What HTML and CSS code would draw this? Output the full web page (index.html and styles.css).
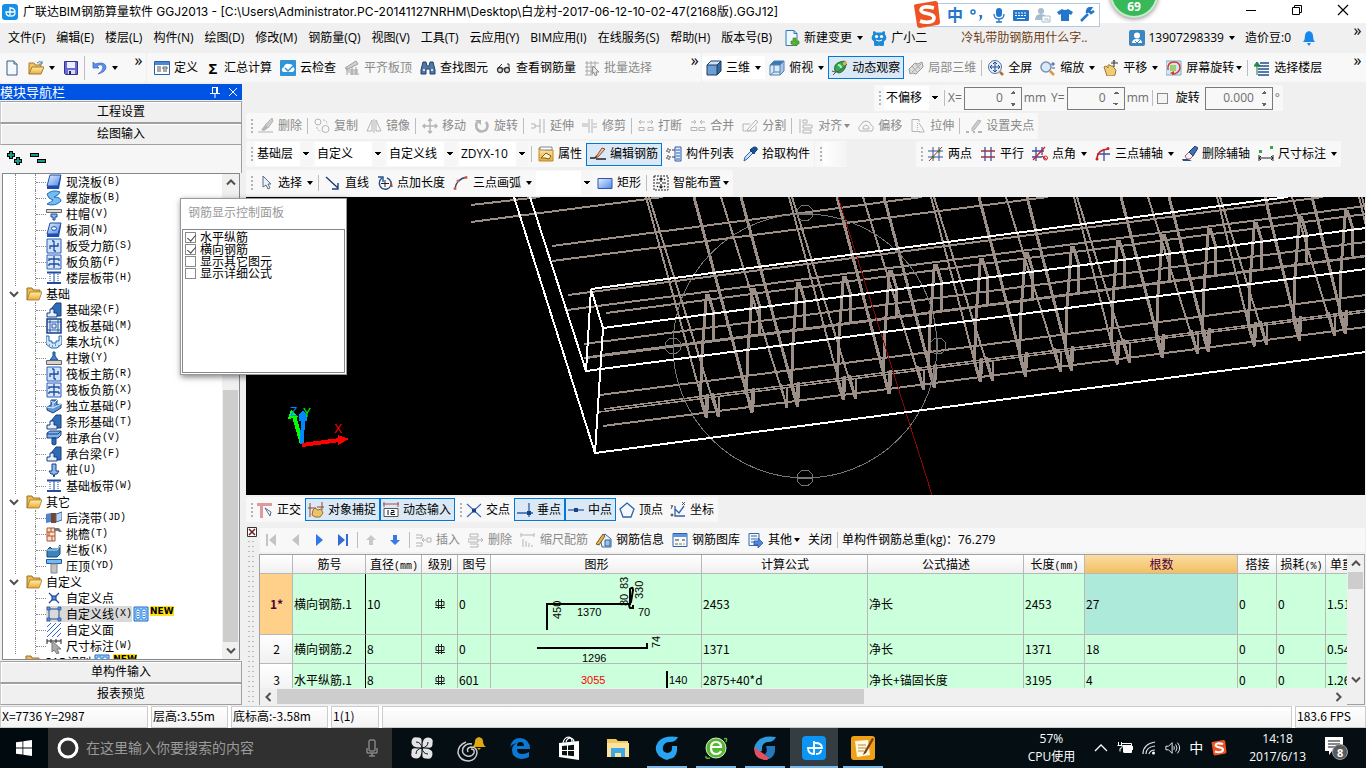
FILE: index.html
```html
<!DOCTYPE html>
<html lang="zh-CN">
<head>
<meta charset="utf-8">
<title>广联达BIM钢筋算量软件 GGJ2013</title>
<link rel="stylesheet" href="styles.css">
</head>
<body>
<svg class="sprite" aria-hidden="true">
<defs>
<linearGradient id="g-blue" x1="0" y1="0" x2="1" y2="1"><stop offset="0" stop-color="#e6f1ff"/><stop offset="1" stop-color="#4f88ea"/></linearGradient>
<linearGradient id="g-fold" x1="0" y1="0" x2="0" y2="1"><stop offset="0" stop-color="#fff0a8"/><stop offset="1" stop-color="#e9a93a"/></linearGradient>
<symbol id="app" viewBox="0 0 16 16"><rect width="16" height="16" rx="3" fill="#1590e8"/><path d="M8 3v9q-4 0-4-4h9q0-4-5-4M13 9q0 3-4 3" fill="none" stroke="#fff" stroke-width="1.300"/></symbol>
<symbol id="new" viewBox="0 0 16 16"><path d="M3 1h7l3 3v11H3z" fill="#f4f9ff" stroke="#3a5a80"/><path d="M10 1v3h3" fill="#cfe0f5" stroke="#3a5a80"/></symbol>
<symbol id="open" viewBox="0 0 16 16"><path d="M1 14V3h5l1 2h6v3" fill="#f3c65a" stroke="#a9792a"/><path d="M1 14l3-7h12l-3 7z" fill="url(#g-fold)" stroke="#a9792a"/><path d="M9 3q3-3 5 0m0-2v3h-3" fill="none" stroke="#4878a8"/></symbol>
<symbol id="save" viewBox="0 0 16 16"><path d="M1.500 1.500h13v13h-12l-1-1z" fill="#6b6bd0" stroke="#34348c"/><path d="M4 2h8v6H4z" fill="#eef0ff"/><path d="M5 10h7v4H5z" fill="#dcdcea"/><path d="M6 11h2v3H6z" fill="#22226a"/></symbol>
<symbol id="undo" viewBox="0 0 16 16"><path d="M2 2v6h6L6 6q5-3 6 1 0 4-5 7 8-2 8-7-1-6-11-3z" fill="#5b91e8" stroke="#2f62c0" stroke-width=".7"/></symbol>
<symbol id="define" viewBox="0 0 16 16"><path d="M.5 1.500h15v13H.5z" fill="#fff" stroke="#2c5fa8"/><path d="M1 2h14v3H1z" fill="#4c86d4"/><path d="M3 7h4M3 9h4M3 11h4M9 7h4v2H9zM9 11h4" stroke="#555" fill="none"/></symbol>
<symbol id="cloud" viewBox="0 0 16 16"><rect width="16" height="16" rx="1" fill="#2f95d8"/><path d="M3 12q-3-3 1-5 1-4 5-3 4 0 4 3 3 2 0 5z" fill="#fff"/><path d="M5 8l3 3 5-5" fill="none" stroke="#2f95d8" stroke-width="1.500"/></symbol>
<symbol id="level" viewBox="0 0 16 16"><path d="M1 8L12 1l2 3L4 9zM2 10h12M4 12h10M6 14h9M3 9v6M8 7v8M12 7v8" fill="#d0d0d0" stroke="#a0a0a0"/></symbol>
<symbol id="find" viewBox="0 0 16 16"><path d="M3 2h3l1 4h2l1-4h3l2 8v4h-5V9H6v5H1v-4z" fill="#5278a8" stroke="#1f3f68"/><path d="M3 10h2M11 10h2" stroke="#cfe2f7" stroke-width="2"/></symbol>
<symbol id="glass" viewBox="0 0 16 16"><circle cx="4" cy="10" r="2.500" fill="#ddd" stroke="#333" stroke-width="1.300"/><circle cx="11" cy="10" r="2.500" fill="#ddd" stroke="#333" stroke-width="1.300"/><path d="M6 9h3M2 8l4-4M13 9V4h-2" fill="none" stroke="#333"/></symbol>
<symbol id="batch" viewBox="0 0 16 16"><path d="M1 3h14M1 7h9M1 11h8M3 1v14M7 1v14M11 1v7M1 15h8" stroke="#aaa" fill="none"/><path d="M9 6l6 6h-3l1 3-2 .5-1-3-2 1z" fill="#e8e8e8" stroke="#888"/></symbol>
<symbol id="cube" viewBox="0 0 16 16"><path d="M1 5h10v10H1z" fill="#6f9fd2"/><path d="M1 5l4-4h10l-4 4z" fill="#cfe2f4"/><path d="M11 5l4-4v10l-4 4z" fill="#36699c"/><path d="M1 5h10v10H1zM1 5l4-4h10l-4 4M15 1v10l-4 4" fill="none" stroke="#1e3f66"/></symbol>
<symbol id="cube2" viewBox="0 0 16 16"><path d="M1 5h10v10H1z" fill="#dceaf8"/><path d="M1 5l4-4h10l-4 4z" fill="#3e78b4"/><path d="M11 5l4-4v10l-4 4z" fill="#a9c8e6"/><path d="M1 5h10v10H1zM1 5l4-4h10l-4 4M15 1v10l-4 4M5 5v7l-4 3M5 12h6" fill="none" stroke="#4f80b4"/></symbol>
<symbol id="orbit" viewBox="0 0 16 16"><path d="M3 11Q1 4 8 2q6-2 6 1 0 8-7 10z" fill="#35a855" stroke="#16702f"/><path d="M6 5q3 0 3 3" stroke="#b8f0b8" stroke-width="2" fill="none"/><circle cx="13" cy="3.500" r="2" fill="#e8b04a"/><path d="M0 11q6 4 15-7M1 15l3-3" fill="none" stroke="#555"/></symbol>
<symbol id="local3d" viewBox="0 0 16 16"><path d="M1 9l6-6 3 1 4-2 1 5-7 7-4-1-2 1z" fill="#ddd" stroke="#999"/><path d="M4 6l5 6M7 3l5 6M4 12l9-8" stroke="#aaa" fill="none"/></symbol>
<symbol id="full" viewBox="0 0 16 16"><circle cx="7" cy="7" r="6.500" fill="#e4eefb" stroke="#5a6f92"/><path d="M7 2v10M2 7h10M5 4l2-2 2 2M5 10l2 2 2-2M4 5L2 7l2 2M10 5l2 2-2 2" fill="none" stroke="#1c4a96"/><path d="M12 12l3 3" stroke="#b0702a" stroke-width="2.500"/></symbol>
<symbol id="zoomi" viewBox="0 0 16 16"><circle cx="6" cy="7" r="5" fill="#d8e9fb" stroke="#7b90ac" stroke-width="1.500"/><path d="M10 11l4 4" stroke="#d99a3a" stroke-width="2.500"/><path d="M11 4h4M13 2v4M12 8h3" stroke="#2f5ea8"/></symbol>
<symbol id="pan" viewBox="0 0 16 16"><path d="M1 7l2-1 2 2 0-3 2 0 1 1 2 0 1 2 2 2-1 5-2 1H4z" fill="#f0cc78" stroke="#a0772c"/><path d="M11 0v7M8 3h7M10 1.500l1-1 1 1" stroke="#333" fill="none"/></symbol>
<symbol id="rot3" viewBox="0 0 16 16"><path d="M0 1h15v14H0z" fill="#cfe8f8" stroke="#78aacc"/><path d="M4 5h6v6H4z" fill="#9ed26a"/><path d="M2 10q-1-8 6-8 6 0 6 6-1 6-8 6" fill="none" stroke="#d8382c" stroke-width="1.500"/><path d="M8 11v4l-4-2z" fill="#d8382c"/></symbol>
<symbol id="floor" viewBox="0 0 16 16"><path d="M6 3h9M4 6h11M4 9h11M4 12h11M4 15h11" stroke="#1f4f8c" stroke-width="1.500"/><path d="M3 15V4M0 6l3-4 3 4z" fill="#2aa05a" stroke="#187a40"/></symbol>
<symbol id="newch" viewBox="0 0 16 16"><path d="M2 .5h8l3 3v12H2z" fill="#eef7ff" stroke="#2f7aa8"/><path d="M10 .5v3h3" fill="none" stroke="#2f7aa8"/><path d="M9 8h3v3h3v3h-3v2H9v-2H7v-3h2z" fill="#57b52c" stroke="#2c7a10" stroke-width=".6"/></symbol>
<symbol id="mascot" viewBox="0 0 16 16"><path d="M2 1.500q2-1 3 1h6q1-2 3-1l0 3q2 2 1 5l-2 2 0 4-3 1-2-1-2 1-3-1 0-4-2-2q-1-3 1-5z" fill="#1d8bd8"/><circle cx="5.500" cy="6.500" r="1.600" fill="#fff"/><circle cx="10.500" cy="6.500" r="1.600" fill="#fff"/><path d="M5 10q3 2 6 0" stroke="#fff" fill="none"/></symbol>
<symbol id="user" viewBox="0 0 16 16"><rect width="16" height="16" rx="2" fill="#3d86c0"/><circle cx="8" cy="5.500" r="3" fill="#fff"/><path d="M3 13q0-4 5-4t5 4z" fill="#fff"/><path d="M6 11l2 2 3-3" stroke="#3d86c0" fill="none"/></symbol>
<symbol id="bell" viewBox="0 0 16 16"><path d="M2 12q2-2 2-6 0-4 4-5 4 1 4 5 0 4 2 6z" fill="#1787f0"/><path d="M6 13h4l-2 3z" fill="#1787f0"/></symbol>
<symbol id="erase" viewBox="0 0 16 16"><path d="M0 14h15" stroke="currentColor"/><path d="M3 12l4-5 3 3-4 3z" fill="currentColor"/><path d="M7 7l7-7 1 3-5 7z" fill="#ccc" stroke="currentColor"/></symbol>
<symbol id="erase2" viewBox="0 0 16 16"><path d="M0 13h6l4 2H1z" fill="#254f88"/><path d="M3 10l4-4 4 4-3 3H5z" fill="#f6eef0" stroke="#a05c70"/><path d="M7 6l6-6 3 2-5 8z" fill="#3d70b4" stroke="#1f3f70"/></symbol>
<symbol id="copy" viewBox="0 0 16 16"><circle cx="4" cy="4" r="3" fill="none" stroke="currentColor"/><circle cx="11.500" cy="11" r="3.500" fill="none" stroke="currentColor"/><path d="M9 2q4 0 4 4M3 9q0 4 4 4" fill="none" stroke="currentColor" stroke-dasharray="2 1"/></symbol>
<symbol id="mirror" viewBox="0 0 16 16"><path d="M6 2v11H1zM10 2v11h5zM8 1v14" fill="none" stroke="currentColor"/></symbol>
<symbol id="move" viewBox="0 0 16 16"><path d="M8 1v14M1 8h14M6 3l2-2 2 2M6 13l2 2 2-2M3 6L1 8l2 2M13 6l2 2-2 2" fill="none" stroke="currentColor" stroke-width="1.400"/></symbol>
<symbol id="rotate" viewBox="0 0 16 16"><path d="M3 4Q1 9 4 12t8 0q3-4 0-8" fill="none" stroke="currentColor" stroke-width="2.500"/><path d="M1 2h6v5z" fill="currentColor"/></symbol>
<symbol id="extend" viewBox="0 0 16 16"><path d="M1 6h4v4H1M5 8h5M10 1v14M14 1v14" fill="none" stroke="currentColor"/></symbol>
<symbol id="trim" viewBox="0 0 16 16"><path d="M0 8h6M7 1v14M10 1v14M11 6h4M11 9h4M0 6h6" fill="none" stroke="currentColor"/></symbol>
<symbol id="break" viewBox="0 0 16 16"><path d="M2 4h5M9 4h5M3 2L1 4l2 2M13 2l2 2-2 2M1 9.500h5v3H1zM10 9.500h5v3h-5z" fill="none" stroke="currentColor"/></symbol>
<symbol id="join" viewBox="0 0 16 16"><path d="M1 4h5M10 4h5M4 2l2 2-2 2M12 2l-2 2 2 2M1 9.500h6v3H1zM9 9.500h6v3H9z" fill="none" stroke="currentColor"/></symbol>
<symbol id="split" viewBox="0 0 16 16"><path d="M1 6h7M1 13h13V8M1 6v7M5 12l9-10 2 2-9 9z" fill="none" stroke="currentColor"/></symbol>
<symbol id="align" viewBox="0 0 16 16"><path d="M2 1v14M5 2h4v3H5zM5 7h9v3H5zM5 12h8v3H5z" fill="none" stroke="currentColor"/></symbol>
<symbol id="offset" viewBox="0 0 16 16"><path d="M2 13Q-1 9 3 7q1-4 5-4t5 4q4 2 1 6zM5 11q-1-3 3-4 4 1 3 4z" fill="none" stroke="currentColor"/></symbol>
<symbol id="stretch" viewBox="0 0 16 16"><path d="M9 4V1.500H2v12h8M9 5l5 8v1H9" fill="none" stroke="currentColor"/><path d="M7.500 5v8" stroke="currentColor" stroke-dasharray="1 1"/></symbol>
<symbol id="grip" viewBox="0 0 16 16"><path d="M0 14h3M12 14h4M7 14h2" stroke="currentColor" stroke-width="2"/><path d="M6 10l6-8 3 1-6 8-3 2z" fill="#ccc" stroke="currentColor"/></symbol>
<symbol id="prop" viewBox="0 0 16 16"><path d="M1 2h5l1 2h8v11H1z" fill="url(#g-fold)" stroke="#c08828"/><path d="M2 1h12v3H2z" fill="#fff" stroke="#888"/><path d="M3 12l5-5 5 3-2 3-4-1z" fill="#fff3d0" stroke="#7a5a20"/></symbol>
<symbol id="editb" viewBox="0 0 16 16"><path d="M0 12h5l3-3M6 13h10" fill="none" stroke="#222" stroke-width="1.500"/><path d="M6 11l6-9 3 1-7 8z" fill="#f2c79a" stroke="#8c4a2c"/></symbol>
<symbol id="list" viewBox="0 0 16 16"><path d="M1 3h3v3H1zM1 10h3v3H1z" fill="none" stroke="#333" stroke-dasharray="2 1"/><path d="M6 4h3M6 11h3" stroke="#333"/><path d="M9 1h6v14H9z" fill="#e3eefc" stroke="#2b5da8"/><path d="M10 4h4M10 7h4M10 10h4M10 13h4" stroke="#2b5da8"/></symbol>
<symbol id="pick" viewBox="0 0 16 16"><path d="M2 15l1-4 6-6 2 2-6 6z" fill="#cfe6fa" stroke="#2a63a8"/><path d="M8 4l4 4 1-2 2-2q1-3-3-3L9 3z" fill="#1d5298" stroke="#123a70"/></symbol>
<symbol id="ax1" viewBox="0 0 16 16"><path d="M0 5h15M0 11h15M5 1v14M11 1v14" stroke="#3c4fa0"/><path d="M1 15L14 1" stroke="#c02828"/><circle cx="5" cy="11" r="1.500" fill="#2c8a2c"/><circle cx="11" cy="5" r="1.500" fill="#2c8a2c"/></symbol>
<symbol id="ax2" viewBox="0 0 16 16"><path d="M5 1v14M11 1v14" stroke="#3c4fa0" stroke-width="1.300"/><path d="M1 5h14M1 11h14" stroke="#a03048" stroke-width="1.300"/></symbol>
<symbol id="ax3" viewBox="0 0 16 16"><path d="M0 5h12M0 11h10M4 1v14M10 1v8" stroke="#3c4fa0" stroke-width="1.300"/><path d="M1 14L13 1M10 10l4 3" stroke="#d02020" stroke-width="1.300"/><circle cx="13.500" cy="12" r="2" fill="none" stroke="#d02020"/></symbol>
<symbol id="ax4" viewBox="0 0 16 16"><path d="M2 8h13M9 3v12" stroke="#3c4fa0" stroke-width="1.300"/><path d="M2 13Q2 4 13 3" fill="none" stroke="#d02020" stroke-width="1.500"/><circle cx="2" cy="13" r="1.500" fill="#d02020"/><circle cx="13" cy="2.500" r="1.500" fill="#d02020"/></symbol>
<symbol id="dim" viewBox="0 0 16 16"><path d="M1 9v6M15 9v6M1 12h14M3 10l-2 2 2 2M13 10l2 2-2 2" fill="none" stroke="#222"/><path d="M1 4h3v3H1zM12 0h3v3h-3z" fill="#2fa84a"/></symbol>
<symbol id="arrow" viewBox="0 0 16 16"><path d="M5 1v11l3-2 2 4 2-1-2-4h3z" fill="#e9f0fa" stroke="#5a6c88"/></symbol>
<symbol id="line" viewBox="0 0 16 16"><path d="M1 2l12 11M13 8v6H7" fill="none" stroke="#1c3f78" stroke-width="1.400"/></symbol>
<symbol id="ptlen" viewBox="0 0 16 16"><path d="M5 3Q1 6 3 11q2 4 7 3 5-2 4-7-1-3-4-4" fill="none" stroke="#24508c" stroke-width="1.400"/><path d="M8 5v7M4 8.500h8" stroke="#222"/><path d="M1 2h5v5" fill="none" stroke="#24508c" stroke-width="1.400"/><path d="M14 7l1 5" stroke="#c04030" stroke-width="1.500"/></symbol>
<symbol id="arc" viewBox="0 0 16 16"><path d="M2 14Q3 4 14 2" fill="none" stroke="#28406c" stroke-width="1.400"/><circle cx="2" cy="13.500" r="1.500" fill="#d8604a"/><circle cx="5" cy="6" r="1.500" fill="#d8604a"/><circle cx="13" cy="2.500" r="1.500" fill="#d8604a"/></symbol>
<symbol id="rect" viewBox="0 0 16 16"><path d="M1 3.500h14v10H1z" fill="url(#g-blue)" stroke="#2a56b0"/></symbol>
<symbol id="smart" viewBox="0 0 16 16"><path d="M1 1h14v14H1z" fill="none" stroke="#222" stroke-dasharray="2 1"/><path d="M8 3v4M8 9v4M3 8h4M9 8h4M6.500 4.500L8 3l1.500 1.500M6.500 11.500L8 13l1.500-1.500M4 4l1 1M12 4l-1 1M4 12l1-1M12 12l-1-1" fill="none" stroke="#222" stroke-width="1.200"/></symbol>
<symbol id="ortho" viewBox="0 0 16 16"><path d="M0 1h15v3H6v12H3V4H0z" fill="#dc9c9c"/><path d="M8 6l5 8 1-4z" fill="#fff" stroke="#56688a"/></symbol>
<symbol id="snap" viewBox="0 0 16 16"><path d="M2 1v14M0 6h8M14 0v8M9 5h7" stroke="#96403c"/><path d="M5 8l2-2 3 2 3-1 2 4-3 4H7l-3-2z" fill="#ecc468" stroke="#98702c"/></symbol>
<symbol id="dyn" viewBox="0 0 16 16"><path d="M0 2h16M1 0v5M15 0v5" stroke="#a45050"/><path d="M1 6.500h14v8H1z" fill="#fff" stroke="#555"/><path d="M5 8v5M8 8.500h3v2H8v2h4" fill="none" stroke="#111"/></symbol>
<symbol id="cross" viewBox="0 0 16 16"><path d="M1 2l14 13M15 2L1 15" stroke="#3c6cb4" stroke-width="1.200"/><rect x="6" y="6.500" width="4" height="4" fill="#1c4484"/></symbol>
<symbol id="perp" viewBox="0 0 16 16"><path d="M0 11h16M12 1v14" stroke="#2c5ca8" stroke-width="1.300"/><rect x="10" y="9" width="4" height="4" fill="#1c4484"/></symbol>
<symbol id="mid" viewBox="0 0 16 16"><path d="M0 8h16" stroke="#2c5ca8" stroke-width="1.300"/><rect x="6" y="6" width="4" height="4" fill="#1c4484"/></symbol>
<symbol id="penta" viewBox="0 0 16 16"><path d="M8 1l7 6-3 8H4L1 7z" fill="#f4f9ff" stroke="#2c62ac" stroke-width="1.300"/></symbol>
<symbol id="coord" viewBox="0 0 16 16"><path d="M5 4v10h10M5 14V7l4 4 5-7" fill="none" stroke="#2c62ac" stroke-width="1.300"/><path d="M1 3l1 2M3 3l-2 4M12 0l3 3M15 0l-3 3" stroke="#333" stroke-width=".8"/><circle cx="2" cy="13" r="1" fill="none" stroke="#333"/></symbol>
<symbol id="ins" viewBox="0 0 16 16"><path d="M0 3h6v3H0M0 14h6v-3H0M6 8h4M8 6L6 8l2 2M11 6h4v4h-4z" fill="none" stroke="currentColor"/></symbol>
<symbol id="del" viewBox="0 0 16 16"><path d="M2 2h8v3H2zM0 7h10v3H0zM2 12h8v3H2M10 8h5M13 6l2 2-2 2" fill="none" stroke="currentColor"/></symbol>
<symbol id="scale" viewBox="0 0 16 16"><path d="M1 3h13M1 1v4M14 1v4M3 7v8M6 9v6M9 11v4M12 13v2" fill="none" stroke="currentColor"/></symbol>
<symbol id="info" viewBox="0 0 16 16"><path d="M4 6l5-4 6 5v8H6z" fill="#e8f1fc" stroke="#35659c"/><path d="M0 12l7-10 2 2-6 9z" fill="#e6b450" stroke="#7c5820"/><path d="M9 8h5v6H9z" fill="#9cc0e8" stroke="#35659c"/></symbol>
<symbol id="lib" viewBox="0 0 16 16"><path d="M1 1.500h14v13H1z" fill="#f6faff" stroke="#2c62ac"/><path d="M1 2h14v3H1z" fill="#5d94dc"/><path d="M3 8h4M10 8h3" stroke="#333"/><path d="M3 12h3" stroke="#d04040"/><path d="M7 12h3" stroke="#3aa03a"/><path d="M11 12h2" stroke="#e0a020"/></symbol>
<symbol id="other" viewBox="0 0 16 16"><path d="M1 1.500h10v12H1z" fill="#f0f6ff" stroke="#3868a8"/><path d="M3 4h6M3 7h6M3 10h3" stroke="#3868a8"/><path d="M6 9h4V6l5 5-5 5v-3H6z" fill="#4f86dc" stroke="#1f4c98" stroke-width=".7"/></symbol>
<symbol id="first" viewBox="0 0 16 16"><path d="M2 2h2v12H2zM12 2v12L5 8z" fill="#c4c4c4"/></symbol>
<symbol id="prev" viewBox="0 0 16 16"><path d="M11 2v12L4 8z" fill="#c4c4c4"/></symbol>
<symbol id="next" viewBox="0 0 16 16"><path d="M4 2v12l7-6z" fill="#2f78e8"/></symbol>
<symbol id="last" viewBox="0 0 16 16"><path d="M2 2v12l7-6zM10 2h2v12h-2z" fill="#2f6cd8"/></symbol>
<symbol id="up" viewBox="0 0 16 16"><path d="M7 3l5 5H9v5H5V8H2z" fill="#c8c8c8"/></symbol>
<symbol id="down" viewBox="0 0 16 16"><path d="M7 13L2 8h3V3h4v5h3z" fill="#3c78e4"/></symbol>
<symbol id="folder" viewBox="0 0 16 16"><path d="M1 14V2h5l1 2h7v3" fill="#f0b850" stroke="#9c7020"/><path d="M1 14l3-8h12l-3 8z" fill="url(#g-fold)" stroke="#a07828" stroke-width=".8"/></symbol>
<symbol id="slab" viewBox="0 0 16 16"><path d="M4 1h11l-3 11H1z" fill="url(#g-blue)" stroke="#1b4fa0"/><path d="M1 12h11l3-11v3l-2 11H1z" fill="#1f4fae"/></symbol>
<symbol id="spiral" viewBox="0 0 16 16"><path d="M1 4q6-5 13-2-1 3-6 5 7 0 7 4-6 6-14 3 4-2 6-4-5-1-6-6z" fill="#74bcf0" stroke="#1d6cc0"/></symbol>
<symbol id="cap" viewBox="0 0 16 16"><path d="M.5 3.500h15v3H.5z" fill="#ddd" stroke="#666"/><path d="M5 8h6v3H9v3H7v-3H5z" fill="#8ab8ee" stroke="#1d4c98"/></symbol>
<symbol id="hole" viewBox="0 0 16 16"><path d="M4 1h11l-3 11H1z" fill="url(#g-blue)" stroke="#1b4fa0"/><path d="M1 12h11l3-11v3l-2 11H1z" fill="#1f4fae"/><ellipse cx="8" cy="6.500" rx="2.500" ry="1.800" fill="#fff" stroke="#1b4fa0"/></symbol>
<symbol id="force" viewBox="0 0 16 16"><path d="M1 1h14v14H1z" fill="#cfe2fb" stroke="#2c5cb4"/><path d="M8 3v10M12 5v3H4v3M6 3h2M8 13h2" fill="none" stroke="#1f4ca0" stroke-width="1.300"/></symbol>
<symbol id="neg" viewBox="0 0 16 16"><path d="M1 1h14v14H1z" fill="#d8e8fc" stroke="#2c5cb4"/><path d="M8 2v12M3 7V5h10v2M3 10h10M3 10v2M13 10v2" fill="none" stroke="#1f4ca0" stroke-width="1.300"/></symbol>
<symbol id="strip" viewBox="0 0 16 16"><path d="M1 2.500h14M1 13h14" stroke="#1f4ca0" stroke-width="2"/><path d="M8 3v10" stroke="#1f4ca0"/><path d="M4 4v8M12 4v8" stroke="#1f4ca0" stroke-dasharray="1 1"/></symbol>
<symbol id="fbeam" viewBox="0 0 16 16"><path d="M5 7l5-6h5v13h-4z" fill="#2f6cb8" stroke="#173f80"/><path d="M1 15v-4h3V7h4v4h3v4z" fill="#e4eefc" stroke="#173f80"/></symbol>
<symbol id="raft" viewBox="0 0 16 16"><path d="M1 1h14v14H1z" fill="#dfeafa" stroke="#173f80" stroke-width="1.500"/><path d="M4 1v14M12 1v14M1 4h14M1 12h14M6 6h4v4H6z" fill="none" stroke="#2d5da8"/></symbol>
<symbol id="pit" viewBox="0 0 16 16"><path d="M0 2h3v5h3v2h4V7h3V2h3v8l-5 4H5l-5-4z" fill="#cfe6fa" stroke="#1f66b0"/><path d="M3 11h1M6 12h1M9 11h1M12 12h1" stroke="#1c4c90"/></symbol>
<symbol id="pier" viewBox="0 0 16 16"><path d="M7 2h2v4l3 4H4l3-4z" fill="#4684cc" stroke="#1d4c98"/><path d="M.5 10.500h15v4H.5z" fill="#d4d4d4" stroke="#666"/></symbol>
<symbol id="indep" viewBox="0 0 16 16"><path d="M1 9l4-2V2h6v5l4-1v4l-8 5-6-3z" fill="#5c96d8" stroke="#173f80"/><path d="M5 3l3 2 3-3M7 5v5l-6-1M7 10l8-4" fill="none" stroke="#e4f0ff"/></symbol>
<symbol id="pcap" viewBox="0 0 16 16"><path d="M1 3l3-2h11v4l-3 3H1z" fill="#7db4ea" stroke="#173f80"/><path d="M1 4h11l3-3" fill="none" stroke="#173f80"/><path d="M6 8h4v6l-2 1-2-1z" fill="#2f6cb8" stroke="#173f80"/></symbol>
<symbol id="pile" viewBox="0 0 16 16"><path d="M6 2h4v7h3l-2 3H9l-1 3-1-3H5L3 9h3z" fill="#8ab8ee" stroke="#173f80"/></symbol>
<symbol id="post" viewBox="0 0 16 16"><path d="M0 4l5-1v9l-5 1z" fill="#4c86d0"/><path d="M5 3h5v10H5z" fill="#7c4428"/><path d="M10 4l6-2v8l-6 2z" fill="#bcd4f0" stroke="#456c9c"/></symbol>
<symbol id="eave" viewBox="0 0 16 16"><path d="M1 2h8v13H1z" fill="#fbe0cc" stroke="#b0502c"/><path d="M1 6h8M1 10h8M5 2v4M3 6v4M6 10v5" stroke="#b0502c"/><path d="M8 2h5l3 4h-3l-1-1H8z" fill="#777"/></symbol>
<symbol id="rail" viewBox="0 0 16 16"><path d="M1 8l3-3 2 2h6l2-4v9l-3 3H1z" fill="#3c84bc" stroke="#164874"/><path d="M1 8h10l3-4" fill="none" stroke="#c4e4fc"/></symbol>
<symbol id="coping" viewBox="0 0 16 16"><path d="M.5 1.500h15v4H.5z" fill="#74b8f4" stroke="#1d5ca8"/><path d="M5 6h6v9H5z" fill="#c4c4c4" stroke="#888"/></symbol>
<symbol id="cpoint" viewBox="0 0 16 16"><path d="M3 3l10 10M13 3L3 13" stroke="#1f4f9c" stroke-width="1.300"/><rect x="6" y="6" width="4" height="4" fill="#4f8cdc" stroke="#173f80"/></symbol>
<symbol id="cline" viewBox="0 0 16 16"><path d="M3 3h10v10H3z" fill="none" stroke="#1f4f9c"/><path d="M1 1h3v3H1zM12 1h3v3h-3zM1 12h3v3H1zM12 12h3v3h-3z" fill="#5c94e0" stroke="#1f4f9c" stroke-width=".7"/></symbol>
<symbol id="cface" viewBox="0 0 16 16"><path d="M1 5l4-4M1 10l9-9M1 15L15 1M6 15l9-9M11 15l4-4" stroke="#2f68c8"/></symbol>
<symbol id="cdim" viewBox="0 0 16 16"><path d="M1 1v5M15 1v5M1 3h14M5 1v4M10 1v4" stroke="#222"/><path d="M6 3v11l2-2 3 4 2-1-2-4h4z" fill="#aaa" stroke="#777"/></symbol>
<symbol id="book" viewBox="0 0 16 16"><path d="M1 1h14v14H1z" fill="#a8d4ff" stroke="#1f6ac0"/><path d="M3 3h4v10H3zM9 3h4v10H9z" fill="#fff" stroke="#2680dc"/><path d="M4 5.500h2M4 8h2M4 10.500h2M10 5.500h2M10 8h2M10 10.500h2" stroke="#2680dc"/></symbol>
<symbol id="phi" viewBox="0 0 10 10"><path d="M3.500 0v10M6.500 0v10M0 8.500h10M1 2.500h8v4H1z" fill="none" stroke="#222"/></symbol>
<symbol id="up-ch" viewBox="0 0 10 10"><path d="M1 7l4-4 4 4" fill="none" stroke="#505050" stroke-width="2"/></symbol>
<symbol id="dn-ch" viewBox="0 0 10 10"><path d="M1 3l4 4 4-4" fill="none" stroke="#505050" stroke-width="2"/></symbol>
<symbol id="lf-ch" viewBox="0 0 10 10"><path d="M7 1L3 5l4 4" fill="none" stroke="#505050" stroke-width="2"/></symbol>
<symbol id="rt-ch" viewBox="0 0 10 10"><path d="M3 1l4 4-4 4" fill="none" stroke="#505050" stroke-width="2"/></symbol>
<symbol id="sogou" viewBox="0 0 28 28"><path d="M1 5Q1 3 4 3L22 0q3 0 3 3l2 18q0 3-3 3L7 27q-3 0-3-3z" fill="#ee5324"/><path d="M21 7Q9 4 8 9c0 5 13 2 13 8 0 5-9 5-14 3" fill="none" stroke="#fff" stroke-width="3.600"/></symbol>
</defs>
</svg>

<header class="titlebar">
  <svg class="ic"><use href="#app"/></svg>
  <h1 class="title">广联达BIM钢筋算量软件 GGJ2013 - [C:\Users\Administrator.PC-20141127NRHM\Desktop\白龙村-2017-06-12-10-02-47(2168版).GGJ12]</h1>
  <div class="winbtns">
    <button aria-label="最小化"><svg viewBox="0 0 12 12"><path d="M1 6.500h10" stroke="#000"/></svg></button>
    <button aria-label="还原"><svg viewBox="0 0 12 12"><path d="M1.500 3.500h7v7h-7zM3.500 3.500v-2h7v7h-2" fill="none" stroke="#000"/></svg></button>
    <button aria-label="关闭"><svg viewBox="0 0 12 12"><path d="M1 1l10 10M11 1L1 11" stroke="#000" stroke-width="1.200"/></svg></button>
  </div>
</header>

<div class="ime">
  <svg class="ime-logo"><use href="#sogou"/></svg>
  <span class="ime-zh">中</span>
  <svg viewBox="0 0 16 16"><circle cx="4" cy="5" r="2" fill="none" stroke="#2277cc" stroke-width="1.500"/><path d="M10 8h3q1 4-3 6 2-3 0-6z" fill="#2277cc"/></svg>
  <svg viewBox="0 0 16 16"><rect x="5" y="1" width="6" height="9" rx="3" fill="#2277cc"/><path d="M3 7q0 5 5 5t5-5M8 12v3M5 15h6" fill="none" stroke="#2277cc" stroke-width="1.300"/></svg>
  <svg viewBox="0 0 16 16"><rect y="3" width="16" height="11" rx="1" fill="#2277cc"/><path d="M2 6h12M2 8.500h12" stroke="#fff" stroke-dasharray="2 1"/><path d="M4 11.500h8" stroke="#fff"/></svg>
  <svg viewBox="0 0 16 16"><circle cx="6" cy="4" r="3" fill="#a8bccf"/><path d="M0 13q0-6 6-6t6 6z" fill="#a8bccf"/><path d="M7 9h8v6H7z" fill="#fff" stroke="#a8bccf"/><path d="M10 11v3M12 11v2h2" fill="none" stroke="#a8bccf"/></svg>
  <svg viewBox="0 0 16 16"><path d="M5 2q3 2 6 0l5 3-2 3-2-1v7H4V7L2 8 0 5z" fill="#2277cc"/></svg>
  <svg viewBox="0 0 16 16"><path d="M2 14l7-7M15 4l-3 2-2-2 2-3q-4 0-4 5" fill="none" stroke="#2277cc" stroke-width="2.600"/></svg>
</div>
<div class="speedball">69</div>

<nav class="menubar">
  <div class="menus">
    <button>文件(F)</button><button>编辑(E)</button><button>楼层(L)</button><button>构件(N)</button><button>绘图(D)</button><button>修改(M)</button><button>钢筋量(Q)</button><button>视图(V)</button><button>工具(T)</button><button>云应用(Y)</button><button>BIM应用(I)</button><button>在线服务(S)</button><button>帮助(H)</button><button>版本号(B)</button>
  </div>
  <div class="menu-extra">
    <button class="tb"><svg class="ic"><use href="#newch"/></svg>新建变更<i class="caret"></i></button>
    <button class="tb"><svg class="ic"><use href="#mascot"/></svg>广小二</button>
  </div>
  <a class="tip" href="#">冷轧带肋钢筋用什么字..</a>
  <div class="account">
    <button class="tb"><svg class="ic"><use href="#user"/></svg>13907298339<i class="caret"></i></button>
    <button class="tb">造价豆:0</button>
    <button class="tb" aria-label="通知"><svg class="ic"><use href="#bell"/></svg></button>
  </div>
  <button class="more">»</button>
</nav>

<div class="toolrow">
  <div class="group g-file">
    <button class="tb" aria-label="新建"><svg class="ic"><use href="#new"/></svg></button>
    <button class="tb" aria-label="打开"><svg class="ic"><use href="#open"/></svg><i class="caret"></i></button>
    <button class="tb" aria-label="保存"><svg class="ic"><use href="#save"/></svg></button>
    <i class="sep tall"></i>
    <button class="tb" aria-label="撤销"><svg class="ic"><use href="#undo"/></svg><i class="caret"></i></button>
    <button class="more">»</button>
  </div>
  <div class="group g-calc">
    <button class="tb"><svg class="ic"><use href="#define"/></svg>定义</button>
    <button class="tb"><b class="sigma">Σ</b>汇总计算</button>
    <button class="tb"><svg class="ic"><use href="#cloud"/></svg>云检查</button>
    <button class="tb" disabled><svg class="ic"><use href="#level"/></svg>平齐板顶</button>
    <button class="tb"><svg class="ic"><use href="#find"/></svg>查找图元</button>
    <button class="tb"><svg class="ic"><use href="#glass"/></svg>查看钢筋量</button>
    <button class="tb" disabled><svg class="ic"><use href="#batch"/></svg>批量选择</button>
    <button class="more">»</button>
  </div>
  <div class="group g-view">
    <button class="tb combo"><svg class="ic"><use href="#cube"/></svg>三维<i class="caret"></i></button>
    <button class="tb"><svg class="ic"><use href="#cube2"/></svg>俯视<i class="caret"></i></button>
    <button class="tb on"><svg class="ic"><use href="#orbit"/></svg>动态观察</button>
    <button class="tb" disabled><svg class="ic"><use href="#local3d"/></svg>局部三维</button>
    <i class="sep"></i>
    <button class="tb"><svg class="ic"><use href="#full"/></svg>全屏</button>
    <button class="tb"><svg class="ic"><use href="#zoomi"/></svg>缩放<i class="caret"></i></button>
    <button class="tb"><svg class="ic"><use href="#pan"/></svg>平移<i class="caret"></i></button>
    <button class="tb"><svg class="ic"><use href="#rot3"/></svg>屏幕旋转<i class="caret near"></i></button>
    <i class="sep"></i>
    <button class="tb"><svg class="ic"><use href="#floor"/></svg>选择楼层</button>
    <button class="more">»</button>
  </div>
</div>

<main class="work">
  <aside class="nav">
    <div class="nav-head"><h2>模块导航栏</h2>
      <svg viewBox="0 0 12 12"><path d="M3.500 1v6M8 1v6M3 1.500h6M1 7.500h10M6 8v4" stroke="#fff" fill="none"/><path d="M7 1h2v6H7z" fill="#fff"/></svg>
      <svg viewBox="0 0 12 12"><path d="M2 2l8 8M10 2l-8 8" stroke="#fff"/></svg>
    </div>
    <button class="nav-btn">工程设置</button>
    <button class="nav-btn">绘图输入</button>
    <div class="nav-tools">
      <button aria-label="展开"><svg viewBox="0 0 18 16"><path d="M5 1v8M1 5h8M12 7v8M8 11h8" stroke="#000" stroke-width="4"/><path d="M5 2v6M2 5h6M12 8v6M9 11h6" stroke="#199a8a" stroke-width="2"/></svg></button>
      <button aria-label="折叠"><svg viewBox="0 0 18 16"><path d="M1 5h9M8 11h9" stroke="#000" stroke-width="4"/><path d="M2 5h7M9 11h7" stroke="#199a8a" stroke-width="2"/></svg></button>
    </div>
    <div class="tree-box">
      <ul class="tree">
        <li><ul>
          <li><svg class="ic"><use href="#slab"/></svg>现浇板<kbd>(B)</kbd></li>
          <li><svg class="ic"><use href="#spiral"/></svg>螺旋板<kbd>(B)</kbd></li>
          <li><svg class="ic"><use href="#cap"/></svg>柱帽<kbd>(V)</kbd></li>
          <li><svg class="ic"><use href="#hole"/></svg>板洞<kbd>(N)</kbd></li>
          <li><svg class="ic"><use href="#force"/></svg>板受力筋<kbd>(S)</kbd></li>
          <li><svg class="ic"><use href="#neg"/></svg>板负筋<kbd>(F)</kbd></li>
          <li><svg class="ic"><use href="#strip"/></svg>楼层板带<kbd>(H)</kbd></li>
        </ul></li>
        <li><div class="branch"><svg class="tw"><use href="#dn-ch"/></svg><svg class="ic"><use href="#folder"/></svg>基础</div><ul>
          <li><svg class="ic"><use href="#fbeam"/></svg>基础梁<kbd>(F)</kbd></li>
          <li><svg class="ic"><use href="#raft"/></svg>筏板基础<kbd>(M)</kbd></li>
          <li><svg class="ic"><use href="#pit"/></svg>集水坑<kbd>(K)</kbd></li>
          <li><svg class="ic"><use href="#pier"/></svg>柱墩<kbd>(Y)</kbd></li>
          <li><svg class="ic"><use href="#force"/></svg>筏板主筋<kbd>(R)</kbd></li>
          <li><svg class="ic"><use href="#neg"/></svg>筏板负筋<kbd>(X)</kbd></li>
          <li><svg class="ic"><use href="#indep"/></svg>独立基础<kbd>(P)</kbd></li>
          <li><svg class="ic"><use href="#fbeam"/></svg>条形基础<kbd>(T)</kbd></li>
          <li><svg class="ic"><use href="#pcap"/></svg>桩承台<kbd>(V)</kbd></li>
          <li><svg class="ic"><use href="#fbeam"/></svg>承台梁<kbd>(F)</kbd></li>
          <li><svg class="ic"><use href="#pile"/></svg>桩<kbd>(U)</kbd></li>
          <li><svg class="ic"><use href="#strip"/></svg>基础板带<kbd>(W)</kbd></li>
        </ul></li>
        <li><div class="branch"><svg class="tw"><use href="#dn-ch"/></svg><svg class="ic"><use href="#folder"/></svg>其它</div><ul>
          <li><svg class="ic"><use href="#post"/></svg>后浇带<kbd>(JD)</kbd></li>
          <li><svg class="ic"><use href="#eave"/></svg>挑檐<kbd>(T)</kbd></li>
          <li><svg class="ic"><use href="#rail"/></svg>栏板<kbd>(K)</kbd></li>
          <li><svg class="ic"><use href="#coping"/></svg>压顶<kbd>(YD)</kbd></li>
        </ul></li>
        <li><div class="branch"><svg class="tw"><use href="#dn-ch"/></svg><svg class="ic"><use href="#folder"/></svg>自定义</div><ul>
          <li><svg class="ic"><use href="#cpoint"/></svg>自定义点</li>
          <li class="sel"><span class="hl"><svg class="ic"><use href="#cline"/></svg>自定义线<kbd>(X)</kbd></span><svg class="ic"><use href="#book"/></svg><em class="newtag">NEW</em></li>
          <li><svg class="ic"><use href="#cface"/></svg>自定义面</li>
          <li><svg class="ic"><use href="#cdim"/></svg>尺寸标注<kbd>(W)</kbd></li>
        </ul></li>
        <li><div class="branch last"><svg class="tw"></svg><svg class="ic"><use href="#folder"/></svg><span>CAD识别</span><svg class="ic"><use href="#book"/></svg><em class="newtag">NEW</em></div></li>
      </ul>
      <div class="vscroll"><svg><use href="#up-ch"/></svg><i class="thumb"></i><svg><use href="#dn-ch"/></svg></div>
    </div>
    <button class="nav-btn">单构件输入</button>
    <button class="nav-btn">报表预览</button>
  </aside>

  <section class="stage">
    <div class="row row-right">
      <form class="bar offsetbar">
        <i class="grip"></i>
        <select aria-label="偏移方式" class="sel-s"><option>不偏移</option></select>
        <i class="sep"></i>
        <label for="ox">X=</label><span class="spin"><input id="ox" value="0" disabled><i></i></span><span>mm</span>
        <label for="oy" class="yl">Y=</label><span class="spin"><input id="oy" value="0" disabled><i></i></span><span>mm</span>
        <i class="sep"></i>
        <input type="checkbox" id="rt"><label for="rt" class="dark">旋转</label>
        <span class="spin wide"><input aria-label="旋转角度" value="0.000" disabled><i></i></span><span>°</span>
      </form>
    </div>
    <div class="row">
      <div class="bar">
        <i class="grip"></i>
        <button class="tb" disabled><svg class="ic"><use href="#erase"/></svg>删除</button>
        <i class="sep"></i>
        <button class="tb" disabled><svg class="ic"><use href="#copy"/></svg>复制</button>
        <button class="tb" disabled><svg class="ic"><use href="#mirror"/></svg>镜像</button>
        <i class="sep"></i>
        <button class="tb" disabled><svg class="ic"><use href="#move"/></svg>移动</button>
        <button class="tb" disabled><svg class="ic"><use href="#rotate"/></svg>旋转</button>
        <i class="sep"></i>
        <button class="tb" disabled><svg class="ic"><use href="#extend"/></svg>延伸</button>
        <button class="tb" disabled><svg class="ic"><use href="#trim"/></svg>修剪</button>
        <i class="sep"></i>
        <button class="tb" disabled><svg class="ic"><use href="#break"/></svg>打断</button>
        <button class="tb" disabled><svg class="ic"><use href="#join"/></svg>合并</button>
        <button class="tb" disabled><svg class="ic"><use href="#split"/></svg>分割</button>
        <i class="sep"></i>
        <button class="tb" disabled><svg class="ic"><use href="#align"/></svg>对齐<i class="caret near"></i></button>
        <button class="tb" disabled><svg class="ic"><use href="#offset"/></svg>偏移</button>
        <button class="tb" disabled><svg class="ic"><use href="#stretch"/></svg>拉伸</button>
        <i class="sep"></i>
        <button class="tb" disabled><svg class="ic"><use href="#grip"/></svg>设置夹点</button>
      </div>
    </div>
    <div class="row">
      <div class="bar">
        <i class="grip"></i>
        <div class="selects">
          <select aria-label="楼层" class="sel-s"><option>基础层</option></select>
          <select aria-label="类别" class="sel-m"><option>自定义</option></select>
          <select aria-label="构件类型" class="sel-m"><option>自定义线</option></select>
          <select aria-label="构件" class="sel-m"><option>ZDYX-10</option></select>
        </div>
        <i class="sep"></i>
        <button class="tb"><svg class="ic"><use href="#prop"/></svg>属性</button>
        <button class="tb on"><svg class="ic"><use href="#editb"/></svg>编辑钢筋</button>
        <button class="tb"><svg class="ic"><use href="#list"/></svg>构件列表</button>
        <button class="tb"><svg class="ic"><use href="#pick"/></svg>拾取构件</button>
      </div>
      <div class="bar stub"><i class="grip"></i><i class="blank"></i></div>
      <div class="bar axisbar">
        <i class="grip"></i>
        <button class="tb"><svg class="ic"><use href="#ax1"/></svg>两点</button>
        <button class="tb"><svg class="ic"><use href="#ax2"/></svg>平行</button>
        <button class="tb"><svg class="ic"><use href="#ax3"/></svg>点角<i class="caret"></i></button>
        <button class="tb"><svg class="ic"><use href="#ax4"/></svg>三点辅轴<i class="caret"></i></button>
        <button class="tb"><svg class="ic"><use href="#erase2"/></svg>删除辅轴</button>
        <button class="tb"><svg class="ic"><use href="#dim"/></svg>尺寸标注<i class="caret"></i></button>
      </div>
    </div>
    <div class="row drawrow">
      <div class="bar">
        <i class="grip"></i>
        <button class="tb"><svg class="ic"><use href="#arrow"/></svg>选择<i class="caret"></i></button>
        <i class="sep"></i>
        <button class="tb"><svg class="ic"><use href="#line"/></svg>直线</button>
        <button class="tb"><svg class="ic"><use href="#ptlen"/></svg>点加长度</button>
        <button class="tb"><svg class="ic"><use href="#arc"/></svg>三点画弧<i class="caret"></i></button>
        <select aria-label="画弧方式" class="sel-s"><option></option></select>
        <button class="tb"><svg class="ic"><use href="#rect"/></svg>矩形</button>
        <i class="sep"></i>
        <button class="tb"><svg class="ic"><use href="#smart"/></svg>智能布置<i class="caret near"></i></button>
      </div>
    </div>

    <div class="canvas">
      <svg class="model" viewBox="246 197 1120 298" preserveAspectRatio="xMinYMin slice" role="img" aria-label="钢筋三维视图">
        <defs>
          <path id="stirrup" d="M707 294l-1 6-4 54-1.500 44 6 20 1.500-24M708 294l5 16v30M706 396l.7 22" fill="none" stroke-width="3"/>
          <path id="hook" d="M713 393l5.500 24 1-20" fill="none" stroke-width="2"/>
        </defs>
        <g class="rebar">
          <path d="M471 205l69-8M471 222l192-25M552 246l370-49M552 261l496-64M568 295l755-98M567 310l799-104M606 313l760-99M584 344l782-102M600 395l766-100M603 426l763-99"/>
          <path d="M604 409l762-99M599 412l767-100" stroke-width="1.500"/>
          <path d="M584 358l782-102M603 355l763-99" stroke-width="2.500"/>
          <g stroke-width="2">
            <path d="M646 197l61 221M649 197l69 220M789 197l55 203M792 197l63 201M931 197l49 185M934 197l58 183M1074 197l43 168M1077 197l52 165M1217 197l37 150M1220 197l46 147M1359 197l7 29M1362 197l4 15"/>
          </g>
          <g stroke-width="3">
            <path d="M694 197l58 216M741 197l57 210M837 197l52 197M884 197l51 191M979 197l47 180M1027 197l45 174M1121 197l42 161M1169 197l40 155M1265 197l35 144M1312 197l34 137"/>
          </g>
          <path d="M721 197l66 210M863 197l60 192M1006 197l54 174M1148 197l49 156M1292 197l42 138"/>
          <use href="#stirrup"/><use href="#stirrup" x="46" y="-6"/><use href="#stirrup" x="91" y="-12"/><use href="#stirrup" x="137" y="-18"/><use href="#stirrup" x="183" y="-24"/><use href="#stirrup" x="228" y="-30"/><use href="#stirrup" x="274" y="-36"/><use href="#stirrup" x="319" y="-42"/><use href="#stirrup" x="365" y="-48"/><use href="#stirrup" x="411" y="-54"/><use href="#stirrup" x="456" y="-60"/><use href="#stirrup" x="502" y="-66"/><use href="#stirrup" x="548" y="-72"/><use href="#stirrup" x="593" y="-78"/><use href="#stirrup" x="639" y="-84"/>
          <use href="#hook"/><use href="#hook" x="68" y="-9"/><use href="#hook" x="137" y="-18"/><use href="#hook" x="205" y="-27"/><use href="#hook" x="274" y="-36"/><use href="#hook" x="342" y="-45"/><use href="#hook" x="411" y="-54"/><use href="#hook" x="479" y="-63"/><use href="#hook" x="548" y="-72"/><use href="#hook" x="616" y="-81"/>
        </g>
        <path class="redaxis" d="M838 197l94 298"/>
        <g class="orbit">
          <circle cx="805" cy="346" r="132"/>
          <circle cx="805" cy="213" r="8"/><circle cx="805" cy="478" r="8"/><circle cx="673" cy="346" r="8"/><circle cx="938" cy="346" r="8"/>
          <path d="M797 213.500h16M797 478.500h16M673.500 338v16M937.500 338v16"/>
        </g>
        <path class="edges" d="M514 197l81 256L1366 352M530 197l56 174 780-102M586 371l5-82 12 39-8 125M591 289l697-92M603 328l763-100"/>
        <g class="gizmo">
          <path d="M302 444l-8-28" stroke="#0f0"/><path d="M288 419l3-9 7 7z" fill="#0f0"/>
          <path d="M302 444l1-28" stroke="#08f"/><path d="M299 421v-6l4-5 4 5v6z" fill="#08f"/>
          <path d="M302 445l38-5" stroke="red"/><path d="M338 435l11 4-11 6z" fill="red"/>
          <text x="290" y="416" fill="#08f">Z</text><text x="303" y="417" fill="#0f0">Y</text><text x="334" y="433" fill="red">X</text>
        </g>
      </svg>
    </div>

    <div class="row snaprow">
      <div class="bar">
        <i class="grip"></i>
        <button class="tb"><svg class="ic"><use href="#ortho"/></svg>正交</button>
        <button class="tb on"><svg class="ic"><use href="#snap"/></svg>对象捕捉</button>
        <button class="tb on"><svg class="ic"><use href="#dyn"/></svg>动态输入</button>
      </div>
      <div class="bar">
        <i class="grip"></i>
        <button class="tb"><svg class="ic"><use href="#cross"/></svg>交点</button>
        <button class="tb on"><svg class="ic"><use href="#perp"/></svg>垂点</button>
        <button class="tb on"><svg class="ic"><use href="#mid"/></svg>中点</button>
        <button class="tb"><svg class="ic"><use href="#penta"/></svg>顶点</button>
        <button class="tb"><svg class="ic"><use href="#coord"/></svg>坐标</button>
      </div>
    </div>

    <section class="detail">
      <div class="dock"><svg viewBox="0 0 10 10"><path d="M.5.5h9v9h-9z" fill="#fff" stroke="#333"/><path d="M2 2l6 6M8 2L2 8" stroke="#701818" stroke-width="1.500"/></svg><i></i></div>
      <div class="detail-main">
        <div class="bar dbar">
          <button class="tb" disabled aria-label="首条"><svg class="ic"><use href="#first"/></svg></button>
          <button class="tb" disabled aria-label="上一条"><svg class="ic"><use href="#prev"/></svg></button>
          <button class="tb" aria-label="下一条"><svg class="ic"><use href="#next"/></svg></button>
          <button class="tb" aria-label="末条"><svg class="ic"><use href="#last"/></svg></button>
          <i class="sep"></i>
          <button class="tb" disabled aria-label="上移"><svg class="ic"><use href="#up"/></svg></button>
          <button class="tb" aria-label="下移"><svg class="ic"><use href="#down"/></svg></button>
          <i class="sep"></i>
          <button class="tb" disabled><svg class="ic"><use href="#ins"/></svg>插入</button>
          <button class="tb" disabled><svg class="ic"><use href="#del"/></svg>删除</button>
          <button class="tb" disabled><svg class="ic"><use href="#scale"/></svg>缩尺配筋</button>
          <button class="tb"><svg class="ic"><use href="#info"/></svg>钢筋信息</button>
          <button class="tb"><svg class="ic"><use href="#lib"/></svg>钢筋图库</button>
          <button class="tb"><svg class="ic"><use href="#other"/></svg>其他<i class="caret near"></i></button>
          <button class="tb">关闭</button>
          <i class="sep"></i>
          <span class="total">单构件钢筋总重(kg)：76.279</span>
        </div>
        <div class="gridbox">
          <div class="gridview">
            <table>
              <colgroup><col class="c33"><col class="c73"><col class="c56"><col class="c36"><col class="c33"><col class="c211"><col class="c166"><col class="c156"><col class="c61"><col class="c153"><col class="c39"><col class="c49"><col class="c56"></colgroup>
              <thead><tr><th></th><th>筋号</th><th>直径<kbd>(mm)</kbd></th><th>级别</th><th>图号</th><th>图形</th><th>计算公式</th><th>公式描述</th><th>长度<kbd>(mm)</kbd></th><th class="cur">根数</th><th>搭接</th><th>损耗<kbd>(%)</kbd></th><th>单重<kbd>(kg)</kbd></th></tr></thead>
              <tbody>
                <tr class="r61"><th class="cur">1*</th><td>横向钢筋.1</td><td>10</td><td class="mid"><svg class="phi"><use href="#phi"/></svg></td><td>0</td>
                  <td class="fig"><svg class="f61" viewBox="0 0 210 60"><path d="M56 56V30h83V15q3-3 3 1l-2 12q-3 3-1 6h3v-3"/><text x="86" y="42">1370</text><text x="147" y="42">70</text><text transform="translate(70 45) rotate(-90)">450</text><text transform="translate(137 15) rotate(-90)">83</text><text transform="translate(152 25) rotate(-90)">330</text><text transform="translate(137 32) rotate(-90)">80</text></svg></td>
                  <td>2453</td><td>净长</td><td>2453</td><td class="cell">27</td><td>0</td><td>0</td><td>1.514</td></tr>
                <tr class="r29"><th>2</th><td>横向钢筋.2</td><td>8</td><td class="mid"><svg class="phi"><use href="#phi"/></svg></td><td>0</td>
                  <td class="fig"><svg class="f29" viewBox="0 0 210 28"><path d="M46 13h110V8"/><text x="91" y="27">1296</text><text transform="translate(169 13) rotate(-90)">74</text></svg></td>
                  <td>1371</td><td>净长</td><td>1371</td><td>18</td><td>0</td><td>0</td><td>0.542</td></tr>
                <tr class="r32"><th>3</th><td>水平纵筋.1</td><td>8</td><td class="mid"><svg class="phi"><use href="#phi"/></svg></td><td>601</td>
                  <td class="fig"><svg class="f32" viewBox="0 0 210 31"><path d="M176 7v24"/><text x="90" y="20" class="red">3055</text><text x="178" y="20">140</text></svg></td>
                  <td>2875+40*d</td><td>净长+锚固长度</td><td>3195</td><td>4</td><td>0</td><td>0</td><td>1.262</td></tr>
              </tbody>
            </table>
          </div>
          <div class="vscroll gv"><svg><use href="#up-ch"/></svg><i class="thumb"></i><svg><use href="#dn-ch"/></svg></div>
          <div class="hscroll"><svg><use href="#lf-ch"/></svg><i class="thumb"></i><svg><use href="#rt-ch"/></svg></div>
        </div>
      </div>
    </section>
  </section>
</main>

<section class="floatpanel">
  <h3>钢筋显示控制面板</h3>
  <div class="checks">
    <label><input type="checkbox" checked>水平纵筋</label>
    <label><input type="checkbox" checked>横向钢筋</label>
    <label><input type="checkbox">显示其它图元</label>
    <label><input type="checkbox">显示详细公式</label>
  </div>
</section>

<footer class="status">
  <span class="s1">X=7736 Y=2987</span><span class="s2">层高:3.55m</span><span class="s3">底标高:-3.58m</span><span class="s4">1(1)</span><span class="s5"></span><span class="s6">183.6 FPS</span>
</footer>

<div class="taskbar">
  <button class="start" aria-label="开始"><svg viewBox="0 0 16 16"><path d="M0 2.300l6.500-.9v6.200H0zM7.300 1.300L16 0v7.600H7.300zM0 8.400h6.500v6.200L0 13.700zM7.300 8.400H16V16l-8.700-1.300z" fill="#fff"/></svg></button>
  <label class="search"><svg viewBox="0 0 22 22"><circle cx="11" cy="11" r="9" fill="none" stroke="#fff" stroke-width="3"/></svg><input type="text" placeholder="在这里输入你要搜索的内容"><svg class="mic" viewBox="0 0 12 18"><rect x="3" y="1" width="6" height="11" rx="1" fill="none" stroke="#aaa"/><path d="M1 9v5h10V9M6 14v3M3 17h6" fill="none" stroke="#aaa"/></svg></label>
  <div class="apps">
    <button aria-label="应用"><svg viewBox="0 0 24 24"><g fill="#e4e4e4"><path d="M11.500 11.500Q1 12 1.500 6t6-4.500q5-.5 4 5z"/><path d="M12.500 11.500Q12 1 18 1.500t4.500 6q.5 5-5 4z"/><path d="M12.500 12.500q10.500-.5 10 5.500t-6 4.500q-5 .5-4-5z"/><path d="M11.500 12.500q.5 10.500-5.500 10t-4.500-6q-.5-5 5-4z"/></g><path d="M12 12Q11 6 6 6M12 12q6-1 6-6M12 12q1 6 6 6M12 12q-6 1-6 6" fill="none" stroke="#0a1216"/></svg></button>
    <button aria-label="提醒"><svg class="wide-ic" viewBox="0 0 30 28"><path d="M15 15q4 0 3 4-2 4-7 3-6-2-4-8 3-5 9-4M12 18q-2-4 3-5 6 0 6 6-1 7-8 8-9 0-11-8 0-8 8-11" fill="none" stroke="#ccc" stroke-width="1.500"/><path d="M16 13q3-2 3-6 0-3 4-4 4 1 4 4 0 4 3 6zM21 14h4l-2 2z" fill="#e0a80c"/></svg></button>
    <button aria-label="Edge"><svg viewBox="0 0 24 24"><path d="M2 11Q4 2 12 2q10 1 10 11H9q0 5 5 5 4 0 7-2v5q-4 2-8 2-9-1-9-9 0-5 5-7-5 1-7 4zM9 10h7q0-4-3.500-4T9 10z" fill="#0a78d4"/></svg></button>
    <button aria-label="商店"><svg viewBox="0 0 24 24"><path d="M2 7l20-2v19L2 21z" fill="#fff"/><path d="M6 7q1-5 5-6 4 0 4 5M9 6q1-4 5-4 3 1 3 4" fill="none" stroke="#fff" stroke-width="1.200"/><path d="M5 10l5-.5V14H5zM11 9.400l6-.7V14h-6zM5 15h5v4.500L5 19zM11 15h6v5.300l-6-.7z" fill="#0a1216"/></svg></button>
    <button aria-label="文件"><svg viewBox="0 0 24 24"><path d="M1 3h9l2 2h10v16H1z" fill="#f0c860"/><path d="M1 7h22v14H1z" fill="#fce49a"/><path d="M5 12h14v9h-4v-4H9v4H5z" fill="#3ca8e8"/></svg></button>
    <button class="run" aria-label="浏览器"><svg viewBox="0 0 24 24"><path d="M23 1Q9-1 3 6-2 14 4 20q4 3 8 4l2-1q7-1 8-8V10h-5q1 7-5 7-5-1-4-6 1-5 7-5 6 0 8-5z" fill="#28a4f0"/></svg></button>
    <button class="run" aria-label="360"><svg viewBox="0 0 24 24"><circle cx="12" cy="12" r="10" fill="#54b830" stroke="#d8f0c8"/><path d="M7 11h10q0-5-5-5t-5 6q0 6 5 6 4 0 5-3" fill="none" stroke="#fff" stroke-width="2.200"/><path d="M2 20Q1 23 6 22M20 3q4-2 2 3" fill="none" stroke="#54b830" stroke-width="1.500"/></svg></button>
    <button class="run" aria-label="广联达"><svg viewBox="0 0 24 24"><path d="M23 1Q9-1 4 6-1 12 3 17l6-2q-1-8 6-9 6 0 8-5z" fill="#3098dc"/><path d="M1 11l16 11-3 2q-9 0-12-6z" fill="#e45060"/><path d="M13 10h9v5q-1 6-6 8l-4-5q3-3 1-8z" fill="#2478bc"/></svg></button>
    <button class="run active" aria-label="GGJ"><svg viewBox="0 0 24 24"><rect width="24" height="24" rx="4" fill="#0c94f4"/><path d="M12 5v13q-6 0-6-6h14q0-5-7-5M19 14q0 4-5 4" fill="none" stroke="#fff" stroke-width="1.800"/></svg></button>
    <button class="run" aria-label="笔记"><svg viewBox="0 0 24 24"><rect width="24" height="24" rx="3" fill="#f0a018"/><path d="M4 5l13-1 2 15-13 2z" fill="#fff8e0"/><path d="M7 9h8M7 12h8M7 15h6" stroke="#b88840"/><path d="M21 2l-8 14-1 3 3-2 8-14z" fill="#7c3c14"/></svg></button>
  </div>
  <div class="cpu"><span>57%</span><span>CPU使用</span></div>
  <div class="tray">
    <svg viewBox="0 0 16 16"><path d="M2 11l6-6 6 6" fill="none" stroke="#fff" stroke-width="1.300"/></svg>
    <svg viewBox="0 0 16 16"><path d="M6 5h8v7H6z" fill="#fff"/><path d="M4.500 3.500h10v9h-8M15.500 6v4M1.500 2v3M4.500 2v3M.5 5.500h5q0 3-2.500 3v3" stroke="#fff" fill="none"/></svg>
    <svg viewBox="0 0 16 16"><path d="M2 14Q2 4 14 2M5 14q0-7 9-8M8 14q1-4 6-4" fill="none" stroke="#ddd" stroke-width="1.200"/><circle cx="12.500" cy="13" r="1.500" fill="#fff"/></svg>
    <svg viewBox="0 0 18 16"><path d="M1 6h3l4-4v12l-4-4H1zM10 6q1 2 0 4M12 4q3 4 0 8M14 2q5 6 0 12" fill="none" stroke="#fff"/></svg>
    <span class="lang">中</span>
    <svg viewBox="0 0 28 28"><use href="#sogou"/></svg>
  </div>
  <div class="clock"><span>14:18</span><span>2017/6/13</span></div>
  <button class="notice" aria-label="通知中心"><svg viewBox="0 0 26 26"><path d="M2 2h18v14H9l-3 4v-4H2z" fill="#fff"/><path d="M5 6h12M5 9h12M5 12h8" stroke="#0a1216"/><circle cx="17" cy="17" r="7.500" fill="#5a5a5a" stroke="#999"/></svg><b>8</b></button>
</div>
</body>
</html>
```
FILE: styles.css
```css
* { box-sizing: border-box; }
body {
  margin: 0;
  min-height: 100vh;
  display: flex;
  flex-direction: column;
  position: relative;
  background: #f0f0f0;
  color: #000;
  font: 12px/16px "Open Sans", "Noto Sans CJK SC", sans-serif;
  overflow: hidden;
}
button, input, select { font: inherit; color: inherit; margin: 0; }
button { border: 0; background: none; padding: 0; white-space: nowrap; }
h1, h2, h3, ul { margin: 0; padding: 0; font-weight: normal; font-size: inherit; }
ul { list-style: none; }
i, em { font-style: normal; }
.sprite { position: absolute; width: 0; height: 0; }
.ic { width: 16px; height: 16px; flex: none; }
kbd { font: 10px/18px "Liberation Mono", monospace; }

.titlebar { display: flex; align-items: center; gap: 5px; height: 23px; padding-left: 2px; background: #fff; }
.title { flex: 1; white-space: nowrap; overflow: hidden; font-family: Inter, "Noto Sans CJK SC", sans-serif; }
.winbtns { display: flex; }
.winbtns button { width: 46px; height: 20px; }
.winbtns svg { width: 12px; height: 12px; }

.ime { position: absolute; top: 3px; right: 266px; z-index: 3; display: flex; align-items: center; gap: 6px; height: 24px; padding: 0 4px; background: #fff; border: 1px solid #b4c8e0; }
.ime svg { width: 16px; height: 16px; }
.ime .ime-logo { width: 28px; height: 28px; margin-left: -20px; }
.ime-zh { color: #2277cc; font-size: 16px; font-weight: bold; }
.speedball { position: absolute; top: -30px; right: 208px; z-index: 3; width: 48px; height: 48px; padding-top: 27px; border-radius: 50%; border: 2px solid #c8ecc8; background: #37b95a; color: #fff; font-weight: bold; line-height: 16px; text-align: center; box-shadow: 0 1px 5px #888; }

.menubar { display: flex; align-items: center; height: 30px; }
.menus { display: flex; gap: 11px; padding-left: 8px; }
.menu-extra { display: flex; margin-left: 8px; }
.tip { margin-left: 30px; color: #6b3a10; text-decoration: none; white-space: nowrap; }
.account { display: flex; gap: 2px; margin-left: auto; padding-right: 30px; }
.more { align-self: flex-start; width: 13px; font-size: 16px; line-height: 14px; }
.menubar .more { margin-right: 2px; }

.tb { display: flex; align-items: center; gap: 4px; height: 23px; padding: 0 4px; }
.tb:disabled { color: #8a8a8a; }
.tb:disabled .ic { color: #b4b4b4; }
.tb.on { background: #dbe9f6; outline: 1px solid #0078d7; outline-offset: -1px; }
.tb.combo { background: #fff; }
.caret { width: 0; height: 0; margin-left: 1px; border: 3px solid transparent; border-top: 4px solid currentColor; border-bottom: 0; }
.caret.near { margin-left: -2px; }
.sep { flex: none; width: 1px; height: 16px; margin: 0 2px 0 1px; background: #bdbdbd; }
.sep.tall { height: 24px; }
.sigma { width: 14px; font-size: 15px; }

.toolrow { display: flex; height: 31px; padding-bottom: 2px; gap: 1px; }
.group { display: flex; align-items: center; background: #f8f8f8; border-radius: 2px; }
.g-file { padding-right: 1px; }
.g-file .more { margin-left: 10px; }
.g-calc { padding-left: 3px; }
.g-calc .more { margin-left: 32px; }
.g-view { flex: 1; }
.g-view .more { margin: 0 2px 0 auto; }

.work { flex: 1; display: grid; grid-template-columns: 242px 1fr; gap: 4px; min-height: 0; }
.nav { display: flex; flex-direction: column; padding-bottom: 1px; }
.nav-head { display: flex; align-items: center; gap: 6px; height: 16px; padding-right: 3px; background: #0054e3; color: #fff; font-size: 13px; }
.nav-head h2 { flex: 1; }
.nav-head svg { width: 12px; height: 12px; }
.nav-btn { height: 22px; border: 1px solid #a0a0a0; border-left-color: #ccc; background: #f0f0f0; box-shadow: inset 1px 1px #fff; }
.nav-head + .nav-btn { margin-top: 1px; }
.nav-tools { display: flex; gap: 5px; height: 28px; padding: 5px 6px; background: #f6f6f6; border-right: 1px solid #a0a0a0; }
.nav-tools svg { width: 18px; height: 16px; }
.tree-box { flex: 1; display: flex; min-height: 0; margin: 0 2px 1px; border: 1px solid #828790; background: #fff; }
.tree { flex: 1; height: 485px; overflow: hidden; padding-left: 12px; font-family: "Noto Sans CJK SC", sans-serif; }
.tree ul { padding-left: 19px; border-left: 1px dotted #888; }
.tree ul li { display: flex; align-items: center; height: 16px; border-left: 1px dotted #888; white-space: nowrap; }
.tree ul li::before { content: ""; width: 10px; border-top: 1px dotted #888; }
.tree ul li .ic { margin-right: 4px; }
.branch { display: flex; align-items: center; height: 16px; margin-left: -6px; gap: 4px; white-space: nowrap; }
.branch .tw { width: 10px; height: 10px; margin-right: 3px; }
.branch.last { gap: 3px; }
.hl { display: flex; align-items: center; height: 16px; background: #d9d9d9; }
.tree ul li.sel > .ic { margin: 0 1px 0 1px; }
.newtag { align-self: flex-start; background: #ffe11a; font: bold 9px/10px "DejaVu Sans", sans-serif; }
.vscroll { display: flex; flex-direction: column; align-items: center; width: 17px; background: #f0f0f0; }
.vscroll svg { width: 10px; height: 17px; flex: none; }
.vscroll .thumb { width: 15px; background: #cdcdcd; }
.tree-box .vscroll { justify-content: space-between; }
.tree-box .thumb { height: 52%; margin-top: auto; }

.stage { display: flex; flex-direction: column; min-width: 0; }
.row { display: flex; align-items: center; height: 28px; }
.drawrow { height: 29px; }
.row-right { justify-content: flex-end; padding-right: 83px; }
.bar { display: flex; align-items: center; height: 26px; background: #f8f8f8; border-radius: 2px; }
.grip { flex: none; width: 2px; height: 14px; margin: 0 1px 0 5px; background: repeating-linear-gradient(#b4b4b4 0 2px, transparent 2px 4px); }
.stub { margin-left: 1px; }
.blank { width: 24px; height: 24px; background: linear-gradient(90deg, #fff, #f3f3f3); }
.axisbar { margin-left: auto; margin-right: 25px; }
.selects { display: flex; gap: 3px; margin: 0 2px 0 1px; }
select { appearance: none; height: 24px; border: 0; border-radius: 0; padding: 0 12px 0 2px; background-color: #fff; background-image: linear-gradient(45deg, transparent 50%, #000 50%), linear-gradient(-45deg, transparent 50%, #000 50%); background-image: conic-gradient(from -45deg at 50% 100%, #000 90deg, transparent 0), linear-gradient(#f6f6f6, #f6f6f6); background-image: linear-gradient(to bottom left, #000 50%, transparent 50%), linear-gradient(to bottom right, #000 50%, transparent 50%), linear-gradient(#f6f6f6, #f6f6f6); background-size: 3px 4px, 3px 4px, 12px 24px; background-position: right 6px center, right 3px center, right 0 center; background-repeat: no-repeat; }
select { background-image: linear-gradient(to top right, transparent 50%, #000 50%), linear-gradient(to top left, transparent 50%, #000 50%), linear-gradient(#f6f6f6, #f6f6f6); }
.sel-s { width: 57px; }
.sel-m { width: 69px; }
.offsetbar { color: #6d6d6d; gap: 2px; padding-right: 3px; }
.offsetbar select, .dark { color: #000; }
.offsetbar .sep { margin: 0 1px; }
.yl { margin-left: 3px; }
.spin { display: flex; align-items: center; width: 58px; height: 23px; border: 1px solid #7a7a7a; }
.spin.wide { width: 68px; margin-left: 3px; }
.spin input { flex: 1; min-width: 0; border: 0; background: none; text-align: right; padding: 0 4px 0 0; }
.spin i { width: 14px; height: 17px; background: linear-gradient(to top right, transparent 50%, #666 50%), linear-gradient(to top left, transparent 50%, #666 50%), linear-gradient(to bottom right, transparent 50%, #666 50%), linear-gradient(to bottom left, transparent 50%, #666 50%); background-size: 3px 3px; background-position: 3px 13px, 6px 13px, 3px 1px, 6px 1px; background-repeat: no-repeat; }
input[type=checkbox] { appearance: none; flex: none; width: 11px; height: 11px; border: 1px solid #8a8a8a; background: #fff; }
.offsetbar input[type=checkbox] { margin: 0 6px 0 1px; background: #f4f4f4; }

.canvas { flex: 1; min-height: 0; background: #000; margin-right: 1px; overflow: hidden; }
.model { display: block; width: 100%; height: 298px; shape-rendering: crispEdges; }
.rebar { stroke: #9c8f88; stroke-width: 2; fill: none; }
.redaxis { stroke: #8a0808; fill: none; }
.orbit { stroke: #777; fill: none; }
.edges { stroke: #fff; stroke-width: 2; fill: none; }
.gizmo path { stroke-width: 4; }
.gizmo text { font: 12px "Liberation Sans", sans-serif; }

.snaprow { height: 29px; }
.snaprow .bar { height: 25px; }
.snaprow .tb { padding-left: 3px; }
.detail { display: flex; height: 182px; }
.dock { display: flex; flex-direction: column; width: 13px; padding: 3px 1px 2px; gap: 2px; }
.dock svg { width: 10px; height: 10px; }
.dock i { flex: 1; width: 8px; background: radial-gradient(circle, #bbb 1px, transparent 1px) 0 0 / 4px 5px; }
.detail-main { flex: 1; min-width: 0; display: flex; flex-direction: column; padding: 4px 1px 1px 0; }
.dbar { height: 24px; margin: 0 0 2px 1px; flex: none; }
.total { padding-left: 2px; white-space: nowrap; }
.gridbox { flex: 1; display: grid; grid-template: 1fr 17px / 1fr 17px; border: 1px solid #a0a0a0; min-height: 0; background: #f0f0f0; }
.gridview { overflow: hidden; min-height: 0; height: 133px; }
table { table-layout: fixed; border-collapse: separate; border-spacing: 0; width: 1122px; font-family: "Noto Sans CJK SC", sans-serif; }
th, td { padding: 0 0 0 1px; font-weight: normal; text-align: left; white-space: nowrap; overflow: hidden; border: 1px solid #b8b8b8; border-top: 0; border-left: 0; }
thead th { height: 19px; text-align: center; background: linear-gradient(#fff, #f0f0f0); }
th kbd { line-height: 12px; }
thead th.cur { background: linear-gradient(#fbdca4, #f2bf60); color: #500040; }
tbody td { background: #ccffdb; }
tbody th { text-align: center; background: linear-gradient(#fff, #f0f0f0); }
tbody th.cur { background: #ffd08a; color: #500040; font-weight: bold; }
tbody td:nth-child(2) { border-right-color: #000; }
td.cell { background: #aeeada; }
td.mid { text-align: center; }
td.fig { padding: 0; }
.phi { width: 10px; height: 10px; }
.fig svg { display: block; width: 210px; }
.fig path { fill: none; stroke: #000; stroke-width: 2; }
.fig text { font: 11px "Liberation Sans", sans-serif; }
.fig .red { fill: #f00; }
.f61 { height: 60px; }
.f29 { height: 28px; }
.f32 { height: 31px; }
.r61 { height: 61px; }
.r29 { height: 29px; }
.r32 { height: 32px; }
.c33 { width: 33px; }
.c36 { width: 36px; }
.c39 { width: 39px; }
.c49 { width: 49px; }
.c56 { width: 56px; }
.c61 { width: 61px; }
.c73 { width: 73px; }
.c153 { width: 153px; }
.c156 { width: 156px; }
.c166 { width: 166px; }
.c211 { width: 211px; }
.gv .thumb { height: 17px; }
.gv svg:last-child { margin-top: auto; }
.hscroll { display: flex; align-items: center; background: #f0f0f0; }
.hscroll svg { width: 17px; height: 10px; flex: none; }
.hscroll .thumb { width: 54%; height: 15px; background: #cdcdcd; }
.hscroll svg:last-child { margin-left: auto; }

.floatpanel { position: absolute; left: 180px; top: 198px; width: 167px; height: 177px; padding: 0 1px 1px; display: flex; flex-direction: column; background: #fff; border: 1px solid #999; box-shadow: 1px 2px 6px rgba(0, 0, 0, .5); z-index: 2; }
.floatpanel h3 { padding: 6px 6px 8px; color: #999; }
.checks { flex: 1; border: 1px solid #828790; padding: 1px 2px; font-family: "Noto Sans CJK SC", sans-serif; }
.checks label { display: flex; align-items: center; gap: 4px; height: 12px; }
.checks input:checked::before { content: ""; display: block; width: 4px; height: 7px; margin-left: 3px; border: solid #444; border-width: 0 1px 1px 0; transform: rotate(40deg); }

.status { display: flex; gap: 3px; height: 22px; background: #fff; font: 12px/18px "Noto Sans CJK SC", sans-serif; }
.status span { border: 1px solid #ccc; background: linear-gradient(#fff, #f3f3f3); padding-left: 1px; white-space: nowrap; }
.s1 { width: 148px; }
.s2 { width: 77px; }
.s3 { width: 97px; }
.s4 { width: 48px; }
.s5 { flex: 1; }
.s6 { width: 71px; }

.taskbar { display: flex; height: 40px; background: #040e13; color: #fff; }
.start { width: 48px; background: #000a0f; }
.start svg { width: 16px; height: 16px; vertical-align: middle; }
.search { display: flex; align-items: center; width: 344px; padding: 0 14px 0 9px; gap: 5px; background: #303030; }
.search svg { width: 22px; height: 22px; }
.search .mic { width: 12px; height: 18px; }
.search input { flex: 1; min-width: 0; border: 0; background: none; font-size: 14px; }
.search input::placeholder { color: #9a9a9a; opacity: 1; }
.apps { display: flex; gap: 1px; padding-left: 6px; }
.apps button { width: 48px; height: 40px; }
.apps svg { width: 24px; height: 24px; vertical-align: middle; }
.apps .wide-ic { width: 30px; height: 28px; }
.run { background: linear-gradient(#76b9ed, #76b9ed) center bottom / 40px 2px no-repeat; }
.run.active { background-color: #343e42; background-size: 48px 2px; }
.cpu, .clock { display: flex; flex-direction: column; justify-content: center; text-align: center; line-height: 18px; }
.cpu { margin-left: auto; padding-right: 18px; }
.tray { display: flex; align-items: center; gap: 8px; padding-right: 22px; }
.tray svg { width: 16px; height: 16px; }
.lang { font-size: 14px; }
.notice { position: relative; width: 60px; }
.notice svg { width: 26px; height: 26px; vertical-align: middle; }
.notice b { position: absolute; left: 31px; top: 17px; font-size: 11px; }
```
